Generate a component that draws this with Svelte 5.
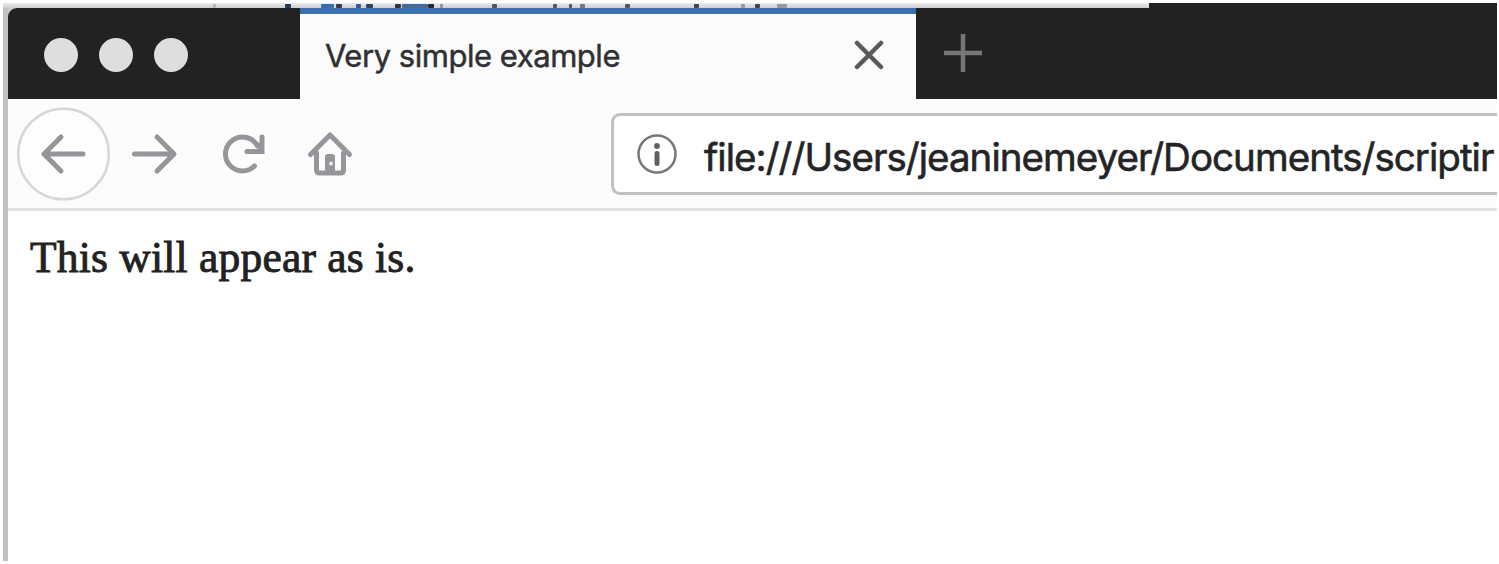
<script>
  const title = 'Very simple example';
  const address = 'file:///Users/jeaninemeyer/Documents/scriptir';
  const specks = [
    [213, 3, '#b5b5b5'], [285, 6, '#24385a'], [321, 13, '#3b6da8'], [336, 6, '#343b49'],
    [356, 5, '#2f5c95'], [366, 7, '#34435a'], [395, 6, '#303338'], [402, 26, '#446b98'],
    [428, 6, '#252525'], [440, 3, '#929292'], [492, 5, '#555'], [553, 4, '#555'],
    [569, 3, '#555'], [580, 5, '#777'], [625, 5, '#555'], [694, 5, '#444'],
    [741, 4, '#999'], [755, 5, '#444'], [777, 10, '#999']
  ];
</script>

<div class="screen">
  <div class="backdrop">
    <svg width="1146" height="5" viewBox="3 3 1146 5">
      {#each specks as [x, w, color]}
        <rect x={x} y="4" width={w} height="4" rx="1" fill={color} />
      {/each}
    </svg>
  </div>
  <div class="window">
    <header class="tabs">
      <div class="lights"><i></i><i></i><i></i></div>
      <div class="tab">
        <span class="title">{title}</span>
        <svg class="close" width="30" height="30" viewBox="0 0 30 30">
          <path d="M3 3L27 27M27 3L3 27" />
        </svg>
      </div>
      <div class="rest">
        <svg class="plus" width="40" height="40" viewBox="0 0 40 40">
          <path d="M20 1V39M1 20H39" />
        </svg>
      </div>
    </header>
    <nav class="toolbar">
      <svg class="icons" width="360" height="110" viewBox="8 99 360 110">
        <circle cx="63.500" cy="154" r="45.300" fill="#fdfdfd" stroke="#d7d7d7" stroke-width="2.500" />
        <g class="stroke">
          <path d="M83 154H44M61 137L44 154L61 171" />
          <path d="M134.500 154H173M157 137L174 154L157 171" />
          <path d="M254.500 166A17 17 0 1 1 257.500 146" />
          <path d="M262 137V151.500H247" stroke-linejoin="miter" />
          <path d="M255 143L261 151V144Z" fill="#95959a" stroke-width="2" />
          <path d="M310.500 154.500L330 135L349.500 154.500" />
          <path d="M316.500 153V170Q316.500 173 319.500 173H340.500Q343.500 173 343.500 170V153" />
        </g>
        <path d="M325 173V157Q325 154 328 154H332Q335 154 335 157V173Z" fill="#95959a" />
        <circle cx="331" cy="163.500" r="2" fill="#ededee" />
      </svg>
      <div class="address">
        <svg width="42" height="42" viewBox="0 0 42 42">
          <circle cx="21" cy="21" r="18.500" fill="none" stroke="#77777b" stroke-width="2.500" />
          <path d="M21 20.500V30.500" stroke="#626266" stroke-width="5" stroke-linecap="round" />
          <circle cx="21" cy="13" r="2.900" fill="#626266" />
        </svg>
        <span>{address}</span>
      </div>
    </nav>
    <main><p>This will appear as is.</p></main>
  </div>
</div>

<style>
  :global(body) { background: #fff; overflow: hidden; }
  .screen {
    box-sizing: border-box;
    width: 1499px;
    height: 564px;
    padding: 3px 2px 3px 3px;
    background: linear-gradient(#222, #222) 1149px 3px / 348px 5px no-repeat #fff;
  }
  .backdrop { width: 1146px; height: 5px; background: linear-gradient(#ebebeb, #cdcdcd); }
  .backdrop svg { display: block; }
  .window {
    box-sizing: border-box;
    width: 1494px;
    height: 553px;
    border-left: 5px solid #c0c0c0;
    background: #fff;
  }
  .tabs { display: flex; height: 91px; background: #222; border-top-left-radius: 9px; }
  .window { background: linear-gradient(#c8c8c8, #c8c8c8) 0 0 / 9px 9px no-repeat #fff; }
  .lights { box-sizing: border-box; width: 292px; padding: 30px 0 0 35.500px; display: flex; gap: 21px; }
  .lights i { width: 34px; height: 34px; border-radius: 50%; background: #dedede; }
  .tab {
    box-sizing: border-box;
    width: 616px;
    border-top: 6px solid #3a70b3;
    background: #fcfcfc;
    display: flex;
    justify-content: space-between;
    padding: 0 32px 0 25px;
  }
  .title {
    font: 400 31px/84px Inter, sans-serif;
    letter-spacing: -0.47px;
    color: #303033;
    white-space: nowrap;
    -webkit-text-stroke: 0.5px #303033;
  }
  .close { margin-top: 26px; fill: none; stroke: #59595c; stroke-width: 4.5; stroke-linecap: round; }
  .rest { padding: 25px 0 0 27px; }
  .plus { fill: none; stroke: #77777a; stroke-width: 4.5; }
  .toolbar {
    box-sizing: border-box;
    display: flex;
    height: 112px;
    border-bottom: 3px solid #e3e3e3;
    background: #fcfcfc;
  }
  .icons { flex: none; }
  .stroke { fill: none; stroke: #95959a; stroke-width: 5; stroke-linecap: round; stroke-linejoin: round; }
  .address {
    box-sizing: border-box;
    width: 886px;
    height: 82px;
    margin: 14px 0 0 243px;
    border: 3px solid #c1c1c1;
    border-right: 0;
    border-radius: 9px 0 0 9px;
    background: #fff;
    display: flex;
    padding: 17px 0 0 22px;
    overflow: hidden;
  }
  .address svg { flex: none; }
  .address span {
    margin: -17px 0 0 26px;
    font: 400 38.5px/82px Inter, sans-serif;
    letter-spacing: -0.96px;
    color: #242426;
    white-space: nowrap;
    -webkit-text-stroke: 0.6px #242426;
  }
  p {
    margin: 0;
    padding: 20px 0 0 22px;
    font: 43.5px/52px "Liberation Serif", serif;
    letter-spacing: 0.22px;
    color: #222;
    white-space: nowrap;
    -webkit-text-stroke: 0.9px #222;
  }
</style>
